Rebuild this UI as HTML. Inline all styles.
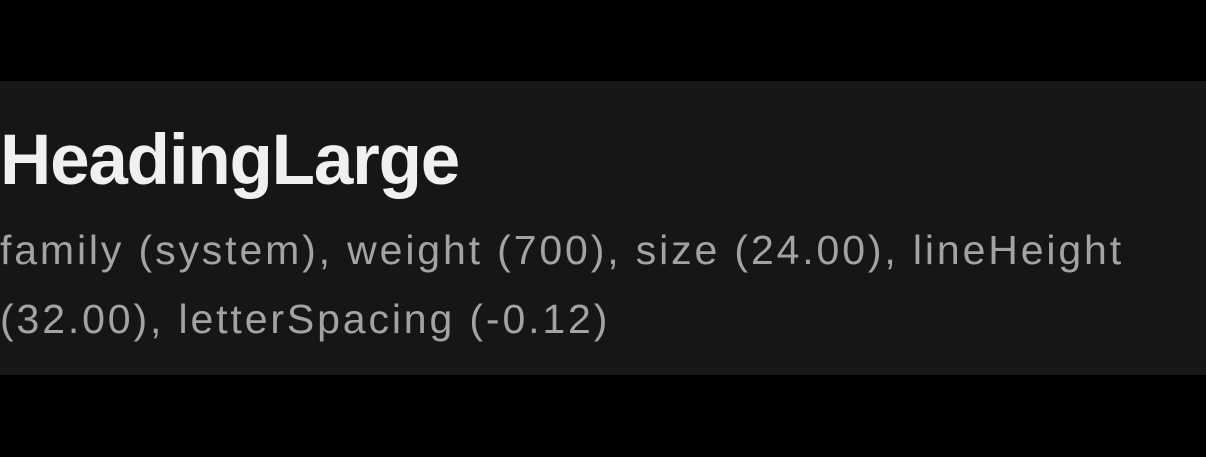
<!DOCTYPE html>
<html><head><style>
html,body{margin:0;padding:0;background:#000;width:1206px;height:457px;overflow:hidden}
.box{position:absolute;left:0;top:81px;width:1206px;height:294px;background:#161616;font-family:"Liberation Sans",sans-serif}
h1{position:absolute;left:0;top:39px;margin:0;font-size:71px;font-weight:700;color:#f0f0f0;letter-spacing:-1.2px;line-height:82px;white-space:nowrap}
p{position:absolute;left:0;top:135px;margin:0;font-size:41px;color:#a3a3a3;line-height:69px;white-space:nowrap;letter-spacing:2.87px}
</style></head><body>
<div class="box">
<h1>HeadingLarge</h1>
<p>family (system), weight (700), size (24.00), lineHeight<br>(32.00), letterSpacing (-0.12)</p>
</div>
</body></html>
